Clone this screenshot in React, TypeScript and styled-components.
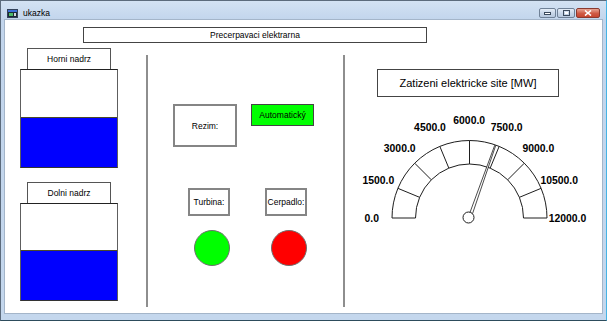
import React from 'react';
import styled, { createGlobalStyle } from 'styled-components';

const GlobalStyle = createGlobalStyle`
  html, body {
    margin: 0;
    padding: 0;
    background: #fff;
  }
  body {
    font-family: "Liberation Sans", Arial, sans-serif;
    color: #000;
  }
`

const Window = styled.div`
  width: 607px;
  height: 321px;
  box-sizing: border-box;
  display: flex;
  flex-direction: column;
  background: linear-gradient(#d3e2f3, #c2d5ec 19px, #c4d7ed);
  border: 1px solid #5c6b7c;
  border-right-color: #46b3e4;
  border-bottom-color: #2d4c5c;
  overflow: hidden;
`

const TitleBar = styled.div`
  height: 18px;
  box-sizing: border-box;
  padding: 6px 6px 0 6px;
  display: flex;
  align-items: center;
`

const Caption = styled.span`
  font-size: 8.5px;
  margin-left: 5px;
  flex: 1;
  color: #000;
`

const CaptionButtons = styled.div`
  display: flex;
  gap: 1px;
`

interface CapBtnProps {
  $w: number
  $close?: boolean
}

const CaptionButton = styled.div<CapBtnProps>`
  width: ${p => p.$w}px;
  height: 10px;
  box-sizing: border-box;
  border: 1px solid ${p => (p.$close ? '#8a3a30' : '#6f8197')};
  border-radius: 2px;
  background: ${p =>
    p.$close
      ? 'linear-gradient(#e8a493, #cf5a45 55%, #c8452f)'
      : 'linear-gradient(#e4edf7, #c6d5e7 55%, #b8c9de)'};
  display: flex;
  align-items: center;
  justify-content: center;
`

const Client = styled.div`
  flex: 1;
  margin: 0 3px 6px 3px;
  border: 1px solid #a4b5c9;
  background: #fff;
  display: grid;
  grid-template-columns: 141px 2px 195px 2px 1fr;
  grid-template-rows: 23px 1fr;
`

const Header = styled.div`
  grid-column: 1 / -1;
  padding: 7px 0 0 78px;
`

interface BoxProps {
  $w: number
  $h: number
  $size?: number
  $bg?: string
  $soft?: boolean
}

const TextBox = styled.div<BoxProps>`
  width: ${p => p.$w}px;
  height: ${p => p.$h}px;
  box-sizing: border-box;
  border: ${p => (p.$soft ? '2px solid #858585' : '1px solid #444')};
  background: ${p => p.$bg || '#fff'};
  display: flex;
  align-items: center;
  justify-content: center;
  font-size: ${p => p.$size || 8.5}px;
  white-space: nowrap;
`

const TankColumn = styled.div`
  padding: 5px 0 0 15px;
  display: flex;
  flex-direction: column;
  gap: 14px;
`

const TankGroup = styled.div`
  width: 98px;
  display: flex;
  flex-direction: column;
  align-items: center;
`

const TankLabel = styled.div`
  width: 84px;
  height: 21px;
  box-sizing: border-box;
  border: 1px solid #555;
  border-bottom: none;
  display: flex;
  align-items: center;
  justify-content: center;
  font-size: 8.5px;
`

const Tank = styled.div<{ $h: number }>`
  width: 98px;
  height: ${p => p.$h}px;
  box-sizing: border-box;
  border: 1px solid #5e5e5e;
  border-top-color: #222;
  border-bottom-color: #333;
  display: flex;
  flex-direction: column;
  justify-content: flex-end;
`

const Water = styled.div`
  background: #0000ff;
  border-top: 1px solid #4a4a2a;
`

const Divider = styled.div`
  margin-top: 12px;
  height: 252px;
  background: #8e8e8e;
`

const ControlColumn = styled.div`
  display: flex;
  flex-direction: column;
`

const ModeRow = styled.div`
  margin-top: 61px;
  padding-left: 25px;
  display: flex;
  align-items: flex-start;
  gap: 14px;
`

const StatusGrid = styled.div`
  margin-top: 41px;
  padding-left: 40px;
  display: grid;
  grid-template-columns: 42px 42px;
  column-gap: 35px;
  row-gap: 14px;
`

const Lamp = styled.div<{ $color: string }>`
  width: 36px;
  height: 36px;
  margin-left: 6px;
  box-sizing: border-box;
  border-radius: 50%;
  border: 1px solid #6e6e6e;
  background: ${p => p.$color};
`

const GaugeColumn = styled.div`
  padding: 26px 0 0 10px;
  display: flex;
  flex-direction: column;
  align-items: flex-start;
`

const GaugeTitle = styled(TextBox)`
  margin-left: 22px;
`

const GaugeSvg = styled.svg`
  margin-top: 11px;
  display: block;
  overflow: visible;
`

const GaugeLabel = styled.text`
  font-family: "Liberation Sans", Arial, sans-serif;
  font-weight: bold;
  font-size: 10.4px;
  fill: #000;
`

const AppIcon = () => (
  <svg width="11" height="9" viewBox="0 0 11 9">
    <rect x="0.5" y="0.5" width="10" height="8" fill="#2b3f5a" stroke="#33425a" />
    <rect x="1" y="1" width="9" height="2" fill="#3a6fd8" />
    <rect x="1" y="3" width="9" height="5" fill="#1c2a36" />
    <rect x="2" y="4" width="4" height="3" fill="#4dbb6a" />
    <rect x="7" y="4" width="2" height="3" fill="#d0d8e0" />
  </svg>
)

const labels = [
  { t: '0.0', x: 16.7, y: 110 },
  { t: '1500.0', x: 23.3, y: 72 },
  { t: '3000.0', x: 44.7, y: 40.7 },
  { t: '4500.0', x: 75, y: 19 },
  { t: '6000.0', x: 114.2, y: 12 },
  { t: '7500.0', x: 151.7, y: 19 },
  { t: '9000.0', x: 183.3, y: 40.7 },
  { t: '10500.0', x: 204.2, y: 72 },
  { t: '12000.0', x: 212.5, y: 110 },
]

const Gauge = ({ value, max }: { value: number; max: number }) => {
  const cx = 114.5
  const cy = 110
  const ro = 77.5
  const ri = 54
  const ticks = []
  for (let i = 0; i <= 8; i++) {
    const a = Math.PI - (i * Math.PI) / 8
    ticks.push(
      <line
        key={i}
        x1={cx + ri * Math.cos(a)}
        y1={cy - ri * Math.sin(a)}
        x2={cx + ro * Math.cos(a)}
        y2={cy - ro * Math.sin(a)}
      />
    )
  }
  const ang = Math.PI - (value / max) * Math.PI
  const ux = Math.cos(ang)
  const uy = -Math.sin(ang)
  const px = -uy
  const py = ux
  const pt = (d: number, w: number) => `${cx + d * ux + w * px},${cy + d * uy + w * py}`
  const needle = [pt(5, -1.4), pt(77, -0.5), pt(77, 0.5), pt(5, 1.4)].join(' ')

  return (
    <GaugeSvg width="240" height="122" viewBox="0 0 240 122">
      <g fill="none" stroke="#1e1e1e" strokeWidth="1">
        <path d={`M ${cx - ro} ${cy} A ${ro} ${ro} 0 0 1 ${cx + ro} ${cy}`} />
        <path d={`M ${cx - ri} ${cy} A ${ri} ${ri} 0 0 1 ${cx + ri} ${cy}`} />
        {ticks}
      </g>
      <polygon points={needle} fill="#fff" stroke="#1e1e1e" strokeWidth="0.8" />
      <circle cx={cx - 1} cy={cy - 0.5} r="5.5" fill="#fff" stroke="#1e1e1e" strokeWidth="1" />
      {labels.map(l => (
        <GaugeLabel key={l.t} x={l.x} y={l.y + 3.7} textAnchor="middle">
          {l.t}
        </GaugeLabel>
      ))}
    </GaugeSvg>
  )
}

export default function App() {
  return (
    <>
      <GlobalStyle />
      <Window>
        <TitleBar>
          <AppIcon />
          <Caption>ukazka</Caption>
          <CaptionButtons>
            <CaptionButton $w={17}>
              <svg width="7" height="3" viewBox="0 0 7 3">
                <rect x="0.5" y="0.5" width="6" height="2" fill="#fff" stroke="#3b4a5c" strokeWidth="1" />
              </svg>
            </CaptionButton>
            <CaptionButton $w={18}>
              <svg width="7" height="6" viewBox="0 0 7 6">
                <rect x="0.5" y="0.5" width="6" height="5" fill="none" stroke="#3b4a5c" strokeWidth="1" />
                <rect x="2" y="2" width="3" height="2" fill="#fff" />
              </svg>
            </CaptionButton>
            <CaptionButton $w={24} $close>
              <svg width="8" height="6" viewBox="0 0 8 6">
                <path d="M1 0.5 L7 5.5 M7 0.5 L1 5.5" stroke="#fff" strokeWidth="1.6" />
              </svg>
            </CaptionButton>
          </CaptionButtons>
        </TitleBar>
        <Client>
          <Header>
            <TextBox $w={344} $h={16}>Precerpavaci elektrarna</TextBox>
          </Header>

          <TankColumn>
            <TankGroup>
              <TankLabel>Horni nadrz</TankLabel>
              <Tank $h={99}>
                <Water style={{ height: '49px' }} />
              </Tank>
            </TankGroup>
            <TankGroup>
              <TankLabel>Dolni nadrz</TankLabel>
              <Tank $h={98}>
                <Water style={{ height: '49px' }} />
              </Tank>
            </TankGroup>
          </TankColumn>

          <Divider />

          <ControlColumn>
            <ModeRow>
              <TextBox $w={64} $h={43} $soft>Rezim:</TextBox>
              <TextBox $w={63} $h={22} $bg="#00ff00">Automatický</TextBox>
            </ModeRow>
            <StatusGrid>
              <TextBox $w={42} $h={28} $soft>Turbina:</TextBox>
              <TextBox $w={42} $h={28} $soft>Cerpadlo:</TextBox>
              <Lamp $color="#00ff00" />
              <Lamp $color="#ff0000" />
            </StatusGrid>
          </ControlColumn>

          <Divider />

          <GaugeColumn>
            <GaugeTitle $w={182} $h={28} $size={11}>Zatizeni elektricke site [MW]</GaugeTitle>
            <Gauge value={7300} max={12000} />
          </GaugeColumn>
        </Client>
      </Window>
    </>
  )
}
